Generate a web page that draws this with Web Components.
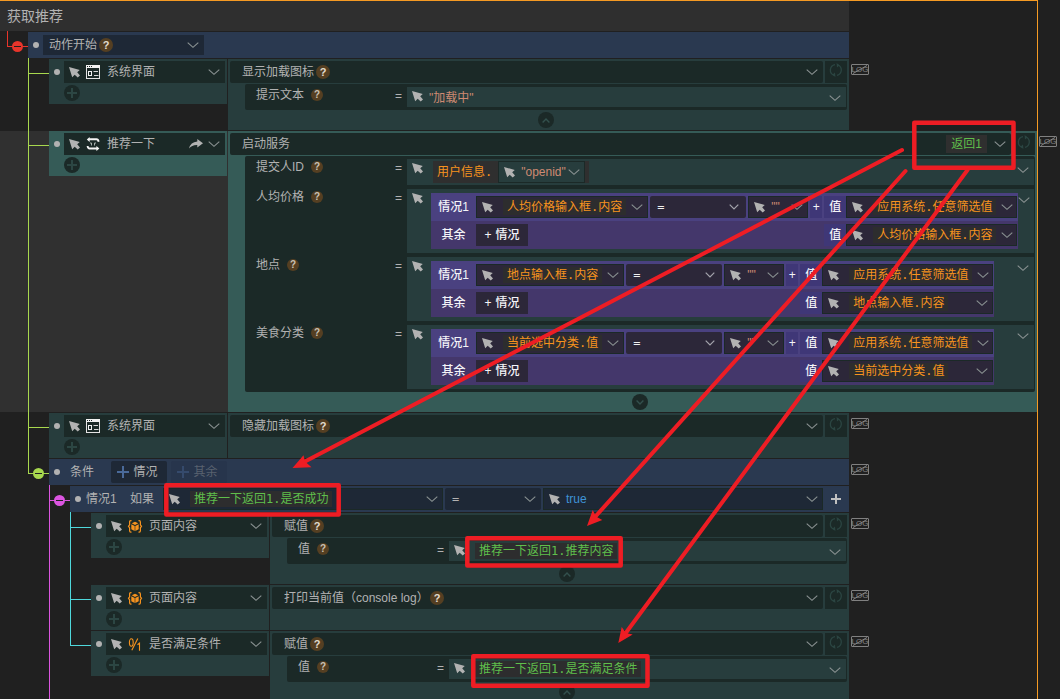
<!DOCTYPE html>
<html lang="zh-CN">
<head>
<meta charset="utf-8">
<title>获取推荐</title>
<style>
  html { background: #202020; }
  body {
    margin: 0;
    height: 100vh;
    overflow: hidden;
    position: relative;
    font: 12px/16px "Liberation Sans", "Noto Sans CJK SC", sans-serif;
    color: #b2b2b2;
    --mono: "DejaVu Sans Mono", "Noto Sans CJK SC", monospace;
    --gutter: 188px;
    --card: #273d3d;
    --cell: #1b2927;
    --event: #2a3950;
    --event-cell: #1e2836;
    --string: #ce8a72;
  }
</style>
</head>
<body>
<flow-panel>
  <flow-title>获取推荐</flow-title>
  <flow-node line="red" toggle last>
    <event-start></event-start>

    <flow-node line="green">
      <action-row>
        <target-card icon="window" name="系统界面"></target-card>
        <action-card name="显示加载图标" help fold="up">
          <param-row name="提示文本">
            <expr-cell tone="param"><string-value value='"加载中"'></string-value></expr-cell>
          </param-row>
        </action-card>
      </action-row>
    </flow-node>

    <flow-node line="green">
      <action-row wide>
        <target-card icon="swap" name="推荐一下" share></target-card>
        <action-card name="启动服务" returns="返回1" fold="down">
          <param-row name="提交人ID">
            <expr-cell tone="param">
              <expr-chip joined>用户信息.<expr-cell slot="tail" tone="nested"><string-value short value='"openid"'></string-value></expr-cell></expr-chip>
            </expr-cell>
          </param-row>
          <param-row name="人均价格">
            <expr-cell tone="param"><case-table subject="人均价格输入框.内容" then="应用系统.任意筛选值" other="人均价格输入框.内容"></case-table></expr-cell>
          </param-row>
          <param-row name="地点">
            <expr-cell tone="param"><case-table subject="地点输入框.内容" then="应用系统.任意筛选值" other="地点输入框.内容"></case-table></expr-cell>
          </param-row>
          <param-row name="美食分类">
            <expr-cell tone="param"><case-table subject="当前选中分类.值" then="应用系统.任意筛选值" other="当前选中分类.值"></case-table></expr-cell>
          </param-row>
        </action-card>
      </action-row>
    </flow-node>

    <flow-node line="green">
      <action-row>
        <target-card icon="window" name="系统界面"></target-card>
        <action-card name="隐藏加载图标" help></action-card>
      </action-row>
    </flow-node>

    <flow-node line="green" toggle last>
      <condition-row></condition-row>
      <flow-node line="magenta" toggle>
        <case-row>
          <expr-cell tone="event"><expr-chip result>推荐一下返回1.是否成功</expr-chip></expr-cell>
          <select-cell tone="event" label="=" class="op"></select-cell>
          <expr-cell tone="event"><bool-value>true</bool-value></expr-cell>
        </case-row>

        <flow-node line="cyan">
          <action-row>
            <target-card icon="cube" name="页面内容"></target-card>
            <action-card name="赋值" help fold="up">
              <param-row name="值">
                <expr-cell tone="param"><expr-chip result>推荐一下返回1.推荐内容</expr-chip></expr-cell>
              </param-row>
            </action-card>
          </action-row>
        </flow-node>
        <flow-node line="cyan">
          <action-row>
            <target-card icon="cube" name="页面内容"></target-card>
            <action-card name="打印当前值（console log）" help></action-card>
          </action-row>
        </flow-node>
        <flow-node line="cyan" last>
          <action-row>
            <target-card icon="bool" name="是否满足条件"></target-card>
            <action-card name="赋值" help fold="up">
              <param-row name="值">
                <expr-cell tone="param"><expr-chip result>推荐一下返回1.是否满足条件</expr-chip></expr-cell>
              </param-row>
            </action-card>
          </action-row>
        </flow-node>
      </flow-node>
    </flow-node>
  </flow-node>
</flow-panel>
<markup-layer></markup-layer>

<script>
const RESET = `
  *, *::before, *::after { box-sizing: border-box; }
  :host([hidden]) { display: none; }
  button, input, select { font: inherit; color: inherit; background: none; border: 0; padding: 0; margin: 0; border-radius: 0; }
  button { display: flex; align-items: center; justify-content: center; cursor: pointer; }
  select { appearance: none; cursor: pointer; flex: none; }
`;

function define(name, render) {
  customElements.define(name, class extends HTMLElement {
    constructor() { super(); this.attachShadow({ mode: 'open' }); }
    connectedCallback() {
      if (this.shadowRoot.childNodes.length) return;
      const { css, html } = render(this);
      const t = document.createElement('template');
      t.innerHTML = `<style>${RESET}${css}</style>${html}`;
      this.shadowRoot.append(t.content.cloneNode(true));
    }
  });
}

const ICONS = {
  cursor: [11, 11, `<path d="M0 0L10.800 3L8.200 5.200L11 8.400L8.700 10.600L5.700 7.700L3.200 10.200Z" fill="#b2b2b2"/>`],
  chevron: [12, 6, `<path d="M.7.6L6 5.3L11.300.6" fill="none" stroke="#8b9393" stroke-width="1.100"/>`],
  'chevron-small': [10, 6, `<path d="M.7.600L5 5L9.300.600" fill="none" stroke="#a4a4ac" stroke-width="1.200"/>`],
  up: [8, 5, `<path d="M.6 4.400L4 1L7.400 4.400" fill="none" stroke="currentColor" stroke-width="1.400"/>`],
  down: [8, 5, `<path d="M.6.600L4 4L7.400.600" fill="none" stroke="currentColor" stroke-width="1.400"/>`],
  add: [10, 10, `<path d="M5 0V10M0 5H10" stroke="currentColor" stroke-width="2"/>`],
  'add-blue': [12, 12, `<path d="M6 0V12M0 6H12" stroke="currentColor" stroke-width="2"/>`],
  'add-bold': [10, 10, `<path d="M5 0V10M0 5H10" stroke="#c0c0c0" stroke-width="2"/>`],
  window: [14, 14, `<rect x=".5" y=".5" width="13" height="13" fill="none" stroke="#e4e4e4"/><path d="M0 0H14V3H0Z" fill="#f2f2f2"/><path d="M1 1.500H2M3 1.500H4M5 1.500H6" stroke="#1b2927"/><rect x="2.500" y="6.500" width="3" height="4" fill="none" stroke="#f2f2f2"/><path d="M7.500 6.500H12M8 10.500H12.500" stroke="#d8d8d8" stroke-width="1.200"/>`],
  swap: [14, 14, `<path d="M3.600 0V5L.800 2.500Z" fill="#f5f5f5"/><path d="M3 2.200H10.500Q12.200 2.200 12.700 4.800" fill="none" stroke="#f5f5f5" stroke-width="1.900"/><path d="M10.400 9V14L13.400 11.500Z" fill="#f5f5f5"/><path d="M11 11.500H3.600Q1.900 11.500 1.600 9" fill="none" stroke="#f5f5f5" stroke-width="1.900"/><path d="M4 6H5.500V8.500M8.500 8.500V6H10" fill="none" stroke="#a9b1af"/>`],
  share: [14, 10, `<path d="M8.300 0L14 4.200L8.300 8.500V6Q3 5.700 0 9.600Q1.500 3 8.300 2.500Z" fill="#b2b2b2"/>`],
  cube: [14, 13, `<path d="M3.500.6H2.800Q1.600.600 1.600 2V4.800L.500 6.300L1.600 7.800V10.800Q1.600 12.200 2.800 12.200H3.500M10.500.600H11.200Q12.400.600 12.400 2V4.800L13.500 6.300L12.400 7.800V10.800Q12.400 12.200 11.200 12.200H10.500" fill="none" stroke="#f7931e" stroke-width="1.200"/><path d="M7 1.700L10.300 3.300L7 4.900L3.700 3.300ZM3.300 4.200L6.700 5.900V10.900L3.300 9.200ZM10.700 4.200L7.300 5.900V10.900L10.700 9.200Z" fill="#f7931e"/>`],
  bool: [14, 13, `<ellipse cx="3.300" cy="4.500" rx="1.900" ry="3.700" fill="none" stroke="#f7931e" stroke-width="1.100"/><path d="M9.800.500L3.800 12.200M9.500 6.700L11.500 5.200V12.700" fill="none" stroke="#f7931e" stroke-width="1.100"/>`],
  refresh: [14, 14, `<path d="M5 12.300A5.500 5.500 0 0 1 6 1.700M9 2A5.500 5.500 0 0 1 8 12.400" fill="none" stroke="#2b4542" stroke-width="1.300"/><path d="M7.600 0L10.600 2.200L8 4.600ZM6.400 14L3.400 11.800L6 9.400Z" fill="#2b4542"/>`]
};

define('ui-icon', el => {
  const [w, h, body] = ICONS[el.getAttribute('name')];
  return {
    css: `:host { display: block; flex: none; width: ${w}px; height: ${h}px; } svg { display: block; overflow: visible; }`,
    html: `<svg width="${w}" height="${h}" viewBox="0 0 ${w} ${h}" aria-hidden="true">${body}</svg>`
  };
});

define('help-dot', el => ({
  css: `:host { display: block; flex: none; }
    button { width: 14px; height: 14px; border-radius: 50%; background: #553f22; color: #e2dccf; font: bold 11px/14px "Liberation Sans", sans-serif; }
    :host([small]) button { width: 12px; height: 12px; font-size: 10px; line-height: 12px; color: #c9c2b4; }`,
  html: `<button>?</button>`
}));

define('log-badge', el => ({
  css: `:host { position: absolute; left: calc(100% + 2px); top: 5px; }
    button { position: relative; width: 18px; height: 11px; border: 1px solid #808080; border-radius: 1px; color: #858585; font: 8px/9px "Liberation Sans", sans-serif; }
    svg { position: absolute; inset: 0; }`,
  html: `<button>LOG<svg width="16" height="9" viewBox="0 0 16 9" aria-hidden="true"><path d="M1 8.500L15 .500" stroke="#858585"/></svg></button>`
}));

define('flow-panel', el => ({
  css: `:host { display: block; isolation: isolate; min-height: 100vh; margin-right: 22px; border: solid #f59a23; border-width: 1px 1px 0 0; box-sizing: border-box; }
    main { display: flex; flex-direction: column; gap: 1px; }
    ::slotted(flow-node) { padding-left: 7px; }`,
  html: `<main><slot></slot></main>`
}));

define('flow-title', el => ({
  css: `:host { display: block; margin-right: var(--gutter); background: #2f2f2f; }
    h1 { margin: 0; padding: 0 7px; font-size: 14px; line-height: 30px; font-weight: 400; }`,
  html: `<h1><slot></slot></h1>`
}));

const LINES = { red: '#e8352b', green: '#a8d84e', magenta: '#dc55e0', cyan: '#4fd8dc' };
define('flow-node', el => ({
  css: `:host { display: grid; grid-template-columns: 21px minmax(0, 1fr); --line: ${LINES[el.getAttribute('line')]}; }
    .rail { position: relative; }
    .rail::before, .rail::after { content: ""; position: absolute; left: 0; background: var(--line); }
    .rail::before { top: -1px; bottom: 0; width: 1px; }
    :host([last]) .rail::before { bottom: auto; height: 16px; }
    .rail::after { top: 14px; right: 0; height: 1px; }
    button { position: absolute; z-index: 1; left: 5px; top: 9px; width: 11px; height: 11px; border-radius: 50%; background: var(--line); }
    button::before { content: ""; width: 7px; height: 1px; background: #202020; }
    .content { display: flex; flex-direction: column; gap: 1px; }`,
  html: `<div class="rail">${el.hasAttribute('toggle') ? '<button aria-label="收起"></button>' : ''}</div><div class="content"><slot></slot></div>`
}));

define('bullet-dot', el => ({
  css: `:host { display: block; flex: none; width: 6px; height: 6px; margin-left: 5px; border-radius: 50%; background: #b2b2b2; }`,
  html: ``
}));

define('select-cell', el => ({
  css: `:host { display: block; }
    label { display: flex; align-items: center; height: 22px; padding: 0 7px; background: #2c2739; color: #f0f0f0; border-radius: 2px; }
    :host([tone=event]) label { background: var(--event-cell); color: inherit; padding-right: 5px; }
    select { font-family: var(--mono); }
    ui-icon { margin-left: auto; }`,
  html: `<label><select aria-label="运算符"><option>${el.getAttribute('label')}</option></select><ui-icon name="${el.getAttribute('tone') === 'event' ? 'chevron' : 'chevron-small'}"></ui-icon></label>`
}));

define('event-start', el => ({
  css: `:host { display: flex; align-items: center; gap: 4px; height: 26px; margin-right: var(--gutter); background: var(--event); }
    label { display: flex; align-items: center; width: 161px; height: 20px; padding: 0 5px 0 6px; background: var(--event-cell); }
    help-dot { margin-left: 1px; }
    ui-icon { margin-left: auto; }`,
  html: `<bullet-dot></bullet-dot><label><select aria-label="事件"><option>动作开始</option></select><help-dot></help-dot><ui-icon name="chevron"></ui-icon></label>`
}));

define('action-row', el => ({
  css: `:host { display: flex; gap: 1px; position: relative; margin-right: var(--gutter); }
    :host([wide]) { margin-right: 0; --card: #355b57; }
    :host([wide])::before { content: ""; position: absolute; z-index: -1; left: -49px; right: 0; top: 0; bottom: 0; background: #303030; }`,
  html: `<slot></slot><log-badge></log-badge>`
}));

define('target-card', el => ({
  css: `:host { display: flex; align-self: flex-start; flex: none; gap: 4px; width: 178px; height: 45px; padding: 2px 2px 0 0; box-sizing: border-box; background: var(--card); }
    bullet-dot { margin-top: 8px; }
    .body { flex: 1; display: flex; flex-direction: column; gap: 2px; }
    label { display: flex; align-items: center; height: 22px; padding: 0 5px; background: var(--cell); }
    .pic { width: 14px; margin: 0 7px 0 6px; display: grid; place-items: center; }
    .end { margin-left: auto; display: flex; align-items: center; gap: 5px; }
    button { width: 16px; height: 16px; border-radius: 50%; background: var(--cell); color: #2c4643; }`,
  html: `<bullet-dot></bullet-dot><div class="body">
    <label><ui-icon name="cursor"></ui-icon><span class="pic"><ui-icon name="${el.getAttribute('icon')}"></ui-icon></span><select aria-label="对象"><option>${el.getAttribute('name')}</option></select><span class="end">${el.hasAttribute('share') ? '<ui-icon name="share"></ui-icon>' : ''}<ui-icon name="chevron"></ui-icon></span></label>
    <button aria-label="添加"><ui-icon name="add"></ui-icon></button></div>`
}));

define('action-card', el => {
  const fold = el.getAttribute('fold'), ret = el.getAttribute('returns');
  return {
    css: `:host { display: block; flex: 1; min-width: 0; min-height: 45px; padding: 2px 2px 0; box-sizing: border-box; background: var(--card); }
      .head { display: flex; gap: 2px; }
      label { flex: 1; display: flex; align-items: center; height: 22px; padding: 0 5px 0 12px; background: var(--cell); border-radius: 2px; }
      .refresh { width: 22px; height: 22px; padding-bottom: 4px; background: var(--cell); }
      help-dot { margin-left: 1px; }
      .end { margin-left: auto; display: flex; align-items: center; gap: 7px; }
      .ret { padding: 0 5px; line-height: 18px; color: #5fbf4c; background: #2f2f2f; }
      .params { display: flex; flex-direction: column; gap: 4px; margin: 1px 0 0 15px; padding: 3px 1px 3px 0; background: var(--cell); border-radius: 2px; }
      .foot { display: flex; justify-content: center; align-items: center; height: 20px; margin-left: 15px; }
      .foot button { width: 16px; height: 16px; border-radius: 50%; background: var(--cell); color: #33504d; }`,
    html: `<div class="head"><label><select aria-label="动作"><option>${el.getAttribute('name')}</option></select>${el.hasAttribute('help') ? '<help-dot></help-dot>' : ''}<span class="end">${ret ? `<span class="ret">${ret}</span>` : ''}<ui-icon name="chevron"></ui-icon></span></label><button class="refresh" aria-label="刷新"><ui-icon name="refresh"></ui-icon></button></div>
      ${fold ? `<div class="params"><slot></slot></div><div class="foot"><button aria-label="展开"><ui-icon name="${fold}"></ui-icon></button></div>` : ''}`
  };
});

define('param-row', el => ({
  css: `:host { display: grid; grid-template-columns: 150px 12px minmax(0, 1fr); --card: #273d3d; }
    .name { display: flex; align-items: center; gap: 7px; height: 16px; padding-left: 11px; }
    .eq { line-height: 18px; }`,
  html: `<span class="name">${el.getAttribute('name')}<help-dot small></help-dot></span><span class="eq">=</span><slot></slot>`
}));

define('expr-cell', el => ({
  css: `:host { display: flex; flex: none; align-items: center; height: 22px; padding: 0 4px 0 5px; box-sizing: border-box; border: 1px solid #1b2927; background: #2c2739; }
    :host([tone=param]) { height: auto; min-height: 20px; align-items: flex-start; padding: 0 5px; border: 0; background: var(--card); }
    :host([tone=param]) .cursor { margin-top: 4px; }
    :host([tone=param]) button { height: 20px; padding-top: 2px; }
    :host([tone=nested]) { background: #273d3d; }
    :host([tone=event]) { flex: 1; background: var(--event-cell); }
    :host(:not([tone])) button { padding-left: 5px; }
    button { margin-left: auto; flex: none; }
    ::slotted(expr-chip) { margin-left: 10px; }
    ::slotted(string-value), ::slotted(bool-value) { margin-left: 6px; }
    ::slotted(case-table) { margin: 4px 0 4px 8px; }`,
  html: `<ui-icon class="cursor" name="cursor"></ui-icon><slot></slot><button aria-label="选择"><ui-icon name="chevron"></ui-icon></button>`
}));

define('expr-chip', el => ({
  css: `:host { display: block; flex: none; padding: 0 4px; margin: 2px 0; line-height: 16px; font-family: var(--mono); color: #f7931e; background: #2d2d2e; white-space: nowrap; }
    :host([result]) { color: #5fbf4c; }
    :host([joined]) { display: flex; align-items: center; gap: 6px; height: 22px; background: #2f2f2f; }`,
  html: `<slot></slot><slot name="tail"></slot>`
}));

define('string-value', el => ({
  css: `:host { display: block; flex: none; width: 120px; font-family: "Liberation Sans", "Noto Sans CJK SC", sans-serif; color: var(--string); }
    :host([short]) { width: 47px; }
    :host([empty]) { width: 15px; }
    input { display: block; width: 100%; height: 18px; }`,
  html: `<input aria-label="文本值" value='${el.getAttribute('value')}'>`
}));

define('bool-value', el => ({
  css: `:host { display: block; color: #3f93d6; }`,
  html: `<slot></slot>`
}));

define('case-table', el => {
  const chip = a => `<expr-chip>${el.getAttribute(a)}</expr-chip>`;
  return {
    css: `:host { display: block; flex: none; color: #f4f4f8; font-weight: 500; }
      .row { display: flex; align-items: center; gap: 2px; height: 28px; padding-right: 1px; background: #4a4180; }
      .row.other { background: #44376b; }
      .lead { display: flex; align-items: center; }
      .name { width: 45px; text-align: center; }
      .op { width: 96px; }
      .right { display: flex; margin-left: auto; }
      .tag { width: 22px; text-align: center; line-height: 22px; background: #3f3777; }
      .value { width: 171px; font-weight: 400; }
      .subject { font-weight: 400; }
      .plus { width: 12px; height: 22px; background: #3f3777; }
      .add { width: 52px; height: 22px; gap: 4px; background: #2c2739; }`,
    html: `<div class="row"><span class="lead"><span class="name">情况1</span><expr-cell class="subject">${chip('subject')}</expr-cell></span><select-cell class="op" label="="></select-cell><expr-cell><string-value empty value='""'></string-value></expr-cell><button class="plus">+</button><span class="right"><span class="tag">值</span><expr-cell class="value">${chip('then')}</expr-cell></span></div>
      <div class="row other"><span class="lead"><span class="name">其余</span><button class="add"><span>+</span><span>情况</span></button></span><span class="right"><span class="tag">值</span><expr-cell class="value">${chip('other')}</expr-cell></span></div>`
  };
});

define('condition-row', el => ({
  css: `:host { display: flex; align-items: center; position: relative; height: 26px; margin-right: var(--gutter); background: var(--event); }
    .name { margin: 0 17px 0 10px; }
    button { width: 56px; height: 22px; gap: 5px; margin-right: 4px; padding-right: 4px; border-radius: 2px; background: var(--event-cell); }
    ui-icon { color: #4a6a9a; }
    button:disabled { background: #27354c; color: #59626f; }
    button:disabled ui-icon { color: #354a6c; }`,
  html: `<bullet-dot></bullet-dot><span class="name">条件</span><button><ui-icon name="add-blue"></ui-icon>情况</button><button disabled><ui-icon name="add-blue"></ui-icon>其余</button><log-badge></log-badge>`
}));

define('case-row', el => ({
  css: `:host { display: flex; align-items: center; gap: 2px; height: 26px; margin-right: var(--gutter); background: var(--event); }
    .name { width: 42px; margin-left: 3px; }
    .if { width: 31px; }
    button { width: 24px; height: 22px; padding-right: 2px; }
    ::slotted(.op) { width: 96px; }`,
  html: `<bullet-dot></bullet-dot><span class="name">情况1</span><span class="if">如果</span><slot></slot><button aria-label="添加条件"><ui-icon name="add-bold"></ui-icon></button>`
}));

/* Hand-drawn review marks that float over the flow. */
define('markup-layer', el => ({
  css: `:host { position: absolute; left: 0; top: 0; pointer-events: none; } svg { display: block; }`,
  html: `<svg width="1060" height="699" viewBox="0 0 1060 699" aria-hidden="true">
    <g fill="none" stroke="#ee1d24" stroke-width="4.500" stroke-linejoin="round" stroke-linecap="round">
      <path d="M914.300 122.700H1013.500V167.700H914.300Z"/>
      <path d="M166.300 485.300H338.700V514.500H166.300Z"/>
      <path d="M467.300 538.300H620.700V565.500H467.300Z"/>
      <path d="M473.300 656.300H647.500V685.700H473.300Z"/>
      <path stroke-width="4" d="M902 150L305 461.500M905.500 171L595 517M967.500 170L625 634"/>
    </g>
    <path fill="#ee1d24" d="M292.500 468L303.500 455.300L305 461.500L311.500 467.300ZM587 526L592.700 510L596 516.500L602.300 520ZM618.300 643L621.700 627L626 633L632.700 634.500Z"/>
  </svg>`
}));
</script>
</body>
</html>
